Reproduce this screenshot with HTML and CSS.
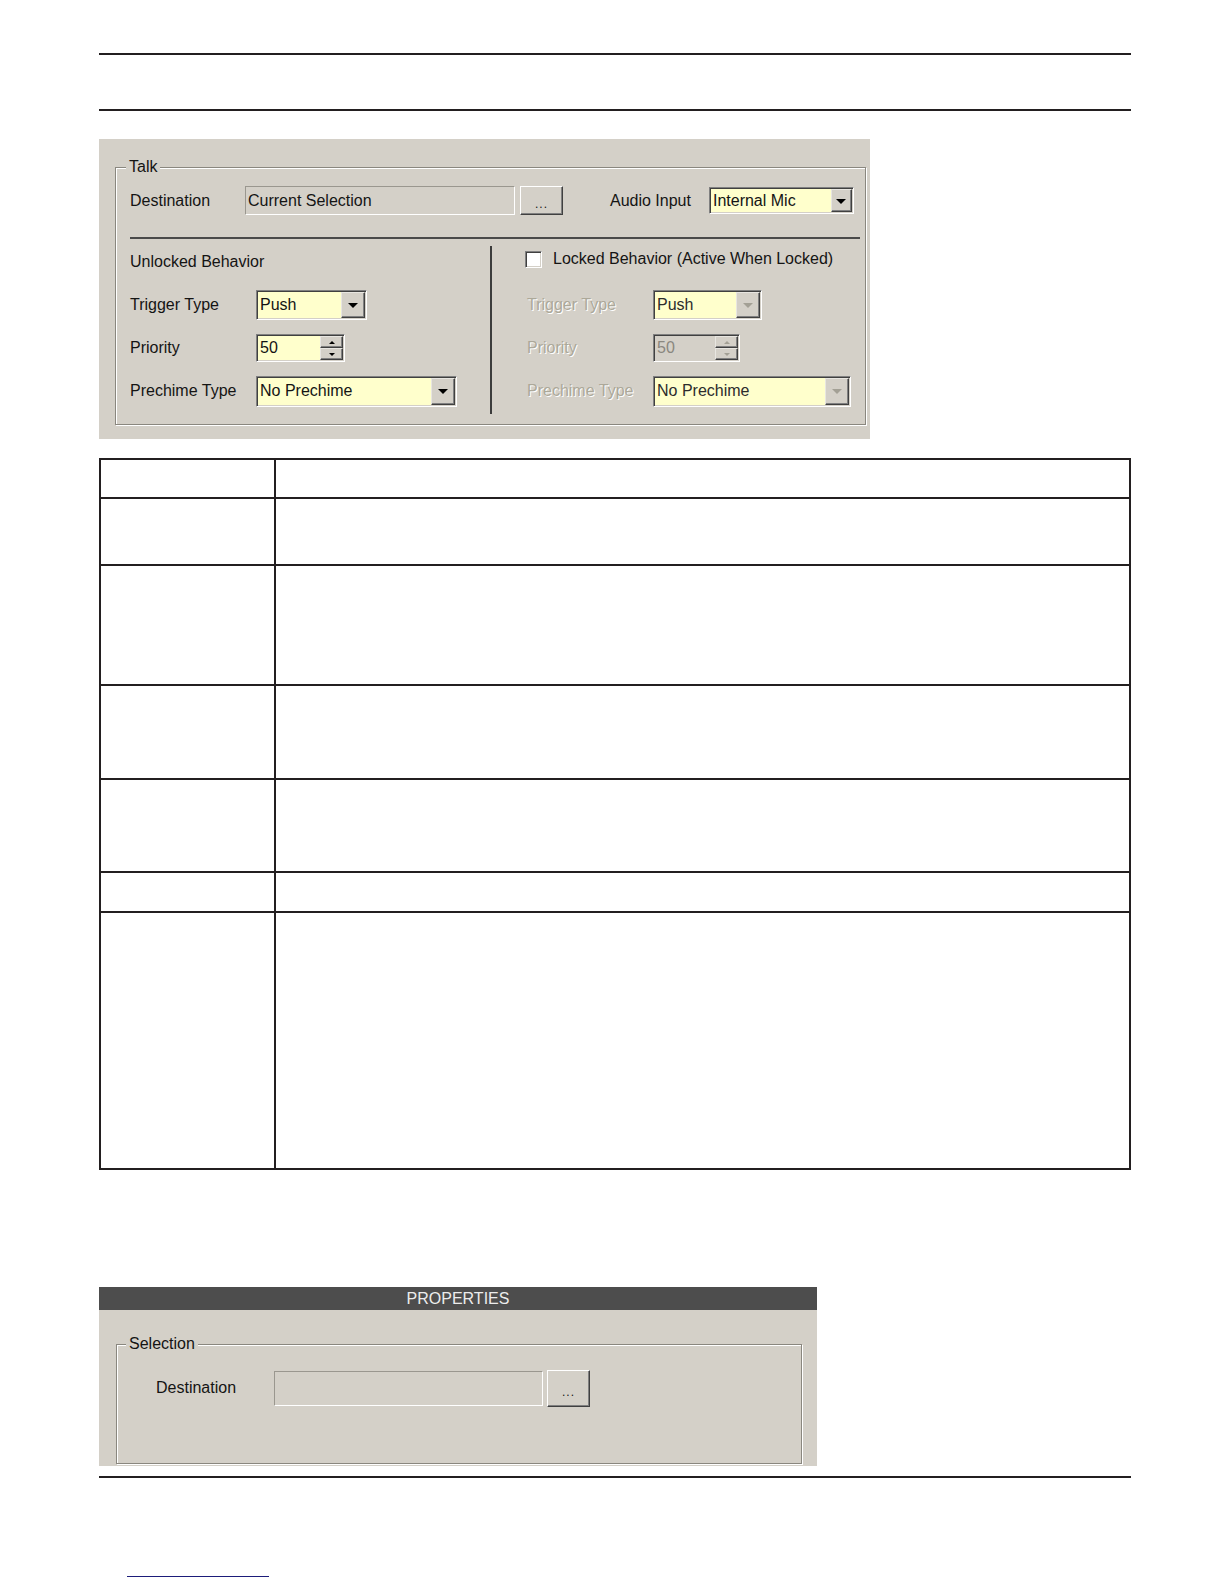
FILE: index.html
```html
<!DOCTYPE html>
<html lang="en">
<head>
    <meta charset="UTF-8">
    <title>Talk Properties</title>
    <link rel="stylesheet" href="styles.css">
</head>
<body>
    <div class="page">
        <hr class="rule">
        <hr class="rule rule-second">

        <div class="dialog talk-dialog">
            <fieldset class="group talk-group">
                <legend>Talk</legend>

                <div class="field-row dest-row">
                    <span class="lbl dest-label">Destination</span>
                    <div class="text-box dest-box">Current Selection</div>
                    <button class="btn btn-dots">...</button>
                    <span class="lbl audio-label">Audio Input</span>
                    <div class="combo combo-audio">
                        <span class="value">Internal Mic</span>
                        <span class="drop"></span>
                    </div>
                </div>

                <div class="divider"></div>

                <div class="behaviors">
                    <div class="behavior unlocked">
                        <div class="behavior-head">Unlocked Behavior</div>
                        <div class="field-row">
                            <span class="lbl col-label">Trigger Type</span>
                            <div class="combo combo-trigger">
                                <span class="value">Push</span>
                                <span class="drop"></span>
                            </div>
                        </div>
                        <div class="field-row">
                            <span class="lbl col-label">Priority</span>
                            <div class="spin">
                                <span class="value">50</span>
                                <span class="spin-btns"><i class="up"></i><i class="down"></i></span>
                            </div>
                        </div>
                        <div class="field-row">
                            <span class="lbl col-label">Prechime Type</span>
                            <div class="combo combo-prechime">
                                <span class="value">No Prechime</span>
                                <span class="drop"></span>
                            </div>
                        </div>
                    </div>

                    <div class="behavior locked is-disabled">
                        <div class="behavior-head">
                            <span class="checkbox"></span>
                            <span class="check-label">Locked Behavior (Active When Locked)</span>
                        </div>
                        <div class="field-row">
                            <span class="lbl col-label">Trigger Type</span>
                            <div class="combo combo-trigger">
                                <span class="value">Push</span>
                                <span class="drop"></span>
                            </div>
                        </div>
                        <div class="field-row">
                            <span class="lbl col-label">Priority</span>
                            <div class="spin">
                                <span class="value">50</span>
                                <span class="spin-btns"><i class="up"></i><i class="down"></i></span>
                            </div>
                        </div>
                        <div class="field-row">
                            <span class="lbl col-label">Prechime Type</span>
                            <div class="combo combo-prechime">
                                <span class="value">No Prechime</span>
                                <span class="drop"></span>
                            </div>
                        </div>
                    </div>
                </div>
            </fieldset>
        </div>

        <table class="spec-table">
            <tr class="row-head"><td></td><td></td></tr>
            <tr class="row-2"><td></td><td></td></tr>
            <tr class="row-3"><td></td><td></td></tr>
            <tr class="row-4"><td></td><td></td></tr>
            <tr class="row-5"><td></td><td></td></tr>
            <tr class="row-6"><td></td><td></td></tr>
            <tr class="row-7"><td></td><td></td></tr>
        </table>

        <div class="dialog props-dialog">
            <div class="props-title">PROPERTIES</div>
            <div class="props-body">
                <fieldset class="group selection-group">
                    <legend>Selection</legend>
                    <div class="field-row sel-row">
                        <span class="lbl sel-label">Destination</span>
                        <div class="text-box sel-box"></div>
                        <button class="btn btn-dots sel-dots">...</button>
                    </div>
                </fieldset>
            </div>
        </div>

        <hr class="rule rule-foot">

        <div class="footer">
            <a class="footer-link" href="#"></a>
        </div>
    </div>
</body>
</html>
```

FILE: styles.css
```css
* {
    margin: 0;
    padding: 0;
    box-sizing: border-box;
}

body {
    background: #fff;
    font-family: 'Liberation Sans', Arial, sans-serif;
    font-size: 16px;
    color: #141414;
}

.page {
    width: 1131px;
    padding: 53px 0 0 99px;
}

.rule {
    border: 0;
    height: 2px;
    background: #231f20;
}

.rule-second {
    margin-top: 54px;
}

/* ---- dialog panels ---- */

.dialog {
    background: #d4d0c8;
    display: flex;
    flex-direction: column;
}

.talk-dialog {
    width: 771px;
    height: 300px;
    margin-top: 28px;
    padding: 19px 4px 15px 16px;
}

.group {
    flex: 1;
    min-width: 0;
    border: 1px solid #8a877f;
    box-shadow: inset 1px 1px 0 #fff, 1px 1px 0 #fff;
}

.group legend {
    font-size: 16px;
    line-height: 18px;
    padding: 0 3px;
    margin-left: -4px;
    background: #d4d0c8;
}

.talk-group {
    padding: 10px 5px 10px 14px;
}

.field-row {
    display: flex;
    align-items: center;
    height: 30px;
}

.lbl {
    flex: none;
    white-space: nowrap;
}

.dest-row {
    height: 29px;
}

.dest-label {
    width: 115px;
}

.audio-label {
    margin-left: 47px;
    margin-right: 18px;
}

/* ---- classic controls ---- */

.text-box {
    height: 29px;
    padding: 0 2px;
    line-height: 27px;
    border: 1px solid;
    border-color: #9a978f #fff #fff #9a978f;
}

.dest-box {
    width: 270px;
}

.btn {
    font-family: inherit;
    color: #141414;
    background: #d4d0c8;
    border: 1px solid;
    border-color: #fff #404040 #404040 #fff;
    box-shadow: inset -1px -1px 0 #808080;
}

.btn-dots {
    width: 43px;
    height: 29px;
    margin-left: 5px;
    font-size: 12px;
    padding-top: 6px;
    letter-spacing: 1px;
}

.combo,
.spin {
    display: flex;
    height: 30px;
    padding: 1px;
    background: #ffffcc;
    border: 1px solid;
    border-color: #808080 #fff #fff #808080;
    box-shadow: inset 1px 1px 0 #404040, inset -1px -1px 0 #d4d0c8;
}

.combo .value,
.spin .value {
    flex: 1;
    padding-left: 2px;
    line-height: 26px;
    white-space: nowrap;
    overflow: hidden;
}

.combo .drop {
    flex: none;
    width: 24px;
    display: flex;
    align-items: center;
    justify-content: center;
    background: #d4d0c8;
    border: 1px solid;
    border-color: #e8e6e1 #404040 #404040 #e8e6e1;
    box-shadow: inset -1px -1px 0 #808080;
}

.combo .drop::before {
    content: '';
    border-left: 5px solid transparent;
    border-right: 5px solid transparent;
    border-top: 5px solid #000;
    margin-top: 1px;
}

.combo-audio {
    width: 145px;
    height: 27px;
}

.combo-audio .value {
    line-height: 23px;
}

.combo-audio .drop {
    width: 21px;
}

.combo-trigger {
    width: 111px;
}

.combo-prechime {
    width: 201px;
    height: 31px;
}

.spin {
    width: 89px;
    height: 28px;
}

.spin .value {
    line-height: 24px;
}

.spin-btns {
    flex: none;
    width: 23px;
    display: flex;
    flex-direction: column;
}

.spin-btns i {
    flex: 1;
    display: flex;
    align-items: center;
    justify-content: center;
    background: #d4d0c8;
    border: 1px solid;
    border-color: #e8e6e1 #404040 #404040 #e8e6e1;
    box-shadow: inset -1px -1px 0 #808080;
}

.spin-btns .up::before {
    content: '';
    border-left: 3px solid transparent;
    border-right: 3px solid transparent;
    border-bottom: 3px solid #000;
}

.spin-btns .down::before {
    content: '';
    border-left: 3px solid transparent;
    border-right: 3px solid transparent;
    border-top: 3px solid #000;
}

/* ---- behaviour columns ---- */

.divider {
    height: 2px;
    margin-top: 22px;
    background: #4a4a4a;
}

.behaviors {
    display: flex;
    height: 168px;
    margin-top: 7px;
}

.behavior {
    display: flex;
    flex-direction: column;
    gap: 13px;
}

.unlocked {
    width: 360px;
}

.locked {
    flex: 1;
    padding-left: 35px;
    border-left: 2px solid #3c3c3c;
}

.behavior-head {
    display: flex;
    align-items: center;
    height: 32px;
    margin-bottom: -1px;
}

.locked .behavior-head {
    height: 26px;
    margin-bottom: 5px;
}

.checkbox {
    width: 17px;
    height: 17px;
    margin-left: -2px;
    margin-right: 11px;
    background: #fff;
    border: 1px solid;
    border-color: #808080 #fff #fff #808080;
    box-shadow: inset 1px 1px 0 #404040, inset -1px -1px 0 #d4d0c8;
}

.col-label {
    width: 126px;
}

.locked .combo-trigger {
    width: 109px;
}

.locked .combo-prechime {
    width: 198px;
}

.locked .spin {
    width: 87px;
}

.is-disabled .col-label {
    color: #aca899;
    text-shadow: 1px 1px 0 #fff;
}

.is-disabled .combo .value {
    color: #2c2c2c;
}

.is-disabled .combo .drop::before {
    border-top-color: #a3a095;
}

.is-disabled .spin {
    background: #d4d0c8;
}

.is-disabled .spin .value {
    color: #8a877f;
}

.is-disabled .spin-btns .up::before {
    border-bottom-color: #a3a095;
}

.is-disabled .spin-btns .down::before {
    border-top-color: #a3a095;
}

/* ---- table ---- */

.spec-table {
    width: 1032px;
    margin-top: 19px;
    border-collapse: collapse;
}

.spec-table td {
    border: 2px solid #231f20;
}

.spec-table td:first-child {
    width: 175px;
}

.row-head { height: 39px; }
.row-2 { height: 67px; }
.row-3 { height: 120px; }
.row-4 { height: 94px; }
.row-5 { height: 93px; }
.row-6 { height: 40px; }
.row-7 { height: 257px; }

/* ---- properties panel ---- */

.props-dialog {
    width: 718px;
    height: 179px;
    margin-top: 117px;
}

.props-title {
    height: 23px;
    line-height: 23px;
    text-align: center;
    background: #4d4d4d;
    color: #ececec;
}

.props-body {
    flex: 1;
    display: flex;
    flex-direction: column;
    padding: 25px 15px 2px 17px;
}

.selection-group {
    padding: 17px 5px 0 13px;
}

.sel-row {
    height: 36px;
    padding-left: 26px;
}

.sel-label {
    width: 118px;
}

.sel-box {
    width: 269px;
    height: 35px;
}

.sel-dots {
    height: 37px;
    margin-left: 4px;
    padding-top: 8px;
}

.rule-foot {
    margin-top: 10px;
}

.footer {
    padding: 97px 0 0 28px;
}

.footer-link {
    display: block;
    width: 142px;
    height: 2px;
    border-bottom: 1px solid #1d1d7a;
}
```
